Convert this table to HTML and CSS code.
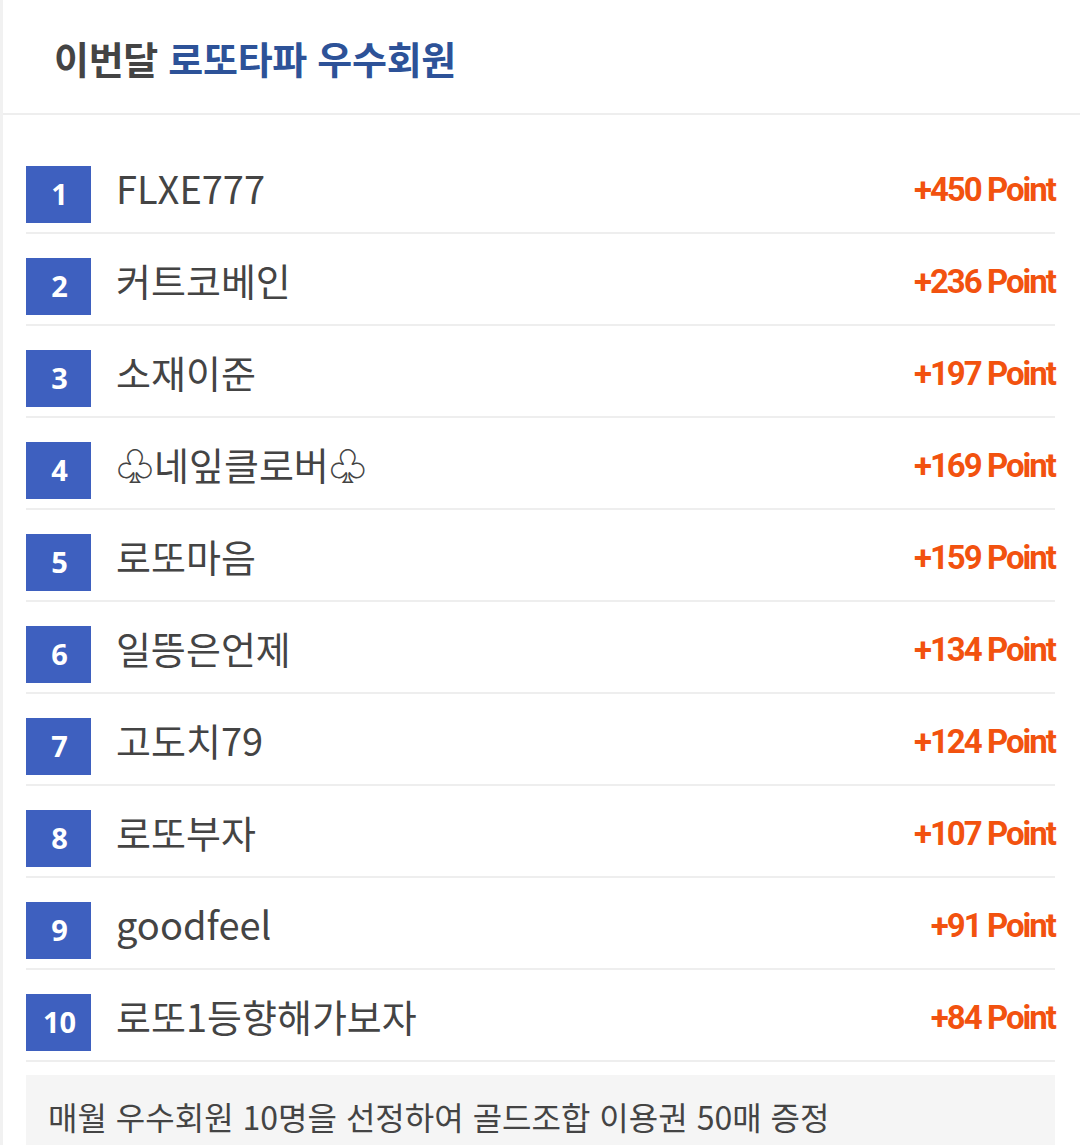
FILE: index.html
```html
<!DOCTYPE html>
<html lang="ko">
<head>
<meta charset="utf-8">
<link rel="stylesheet" href="styles.css">
</head>
<body>
<div class="panel">
  <div class="head">
    <h2 class="title">이번달 <span class="accent">로또타파 우수회원</span></h2>
  </div>
  <div class="body">
    <ul class="rank">
      <li class="row"><span class="badge">1</span><span class="name">FLXE777</span><span class="pt">+450 Point</span></li>
      <li class="row"><span class="badge">2</span><span class="name">커트코베인</span><span class="pt">+236 Point</span></li>
      <li class="row"><span class="badge">3</span><span class="name">소재이준</span><span class="pt">+197 Point</span></li>
      <li class="row"><span class="badge">4</span><span class="name">♧네잎클로버♧</span><span class="pt">+169 Point</span></li>
      <li class="row"><span class="badge">5</span><span class="name">로또마음</span><span class="pt">+159 Point</span></li>
      <li class="row"><span class="badge">6</span><span class="name">일뜽은언제</span><span class="pt">+134 Point</span></li>
      <li class="row"><span class="badge">7</span><span class="name">고도치79</span><span class="pt">+124 Point</span></li>
      <li class="row"><span class="badge">8</span><span class="name">로또부자</span><span class="pt">+107 Point</span></li>
      <li class="row"><span class="badge">9</span><span class="name">goodfeel</span><span class="pt">+91 Point</span></li>
      <li class="row"><span class="badge">10</span><span class="name">로또1등향해가보자</span><span class="pt">+84 Point</span></li>
    </ul>
    <div class="notice">매월 우수회원 10명을 선정하여 골드조합 이용권 50매 증정</div>
  </div>
</div>
</body>
</html>
```

FILE: styles.css
```css
* { box-sizing: border-box; }
html, body { margin: 0; padding: 0; background: #fff; }
body {
  font-family: "Noto Sans CJK KR", "Noto Sans", sans-serif;
  color: #444;
}
.panel {
  width: 1080px;
  min-height: 1145px;
  background: #fff;
  border-left: 3px solid #f1f1f1;
}
.head {
  height: 115px;
  border-bottom: 2px solid #eeeeee;
  padding-left: 51px;
  display: flex;
  align-items: center;
}
.title {
  margin: 0;
  font-size: 38px;
  font-weight: 700;
  color: #444;
  letter-spacing: -0.3px;
  line-height: 1;
  position: relative;
  top: 1px;
}
.accent { color: #2d5298; }
.body {
  padding: 27px 25px 0 23px;
}
.rank {
  list-style: none;
  margin: 0;
  padding: 0;
}
.row {
  display: flex;
  align-items: center;
  padding: 24px 0 9px;
  border-bottom: 2px solid #eeeeee;
}
.badge {
  width: 65px;
  height: 57px;
  flex: none;
  background: #3e60bf;
  color: #fff;
  font-family: "Noto Sans", sans-serif;
  font-weight: 700;
  font-size: 29px;
  display: flex;
  align-items: center;
  justify-content: center;
  padding-left: 2px;
  padding-bottom: 3px;
}
.name {
  flex: 1;
  margin-left: 25px;
  font-size: 38px;
  color: #444;
  line-height: 1;
  position: relative;
  top: -7px;
}
.pt {
  font-family: Roboto, sans-serif;
  font-weight: 700;
  font-size: 33px;
  letter-spacing: -2px;
  color: #f2520f;
  position: relative;
  top: -5px;
}
.notice {
  margin-top: 13px;
  background: #f5f5f5;
  padding: 22px 22px 20px;
  font-size: 32px;
  color: #444;
  line-height: 1.2;
}
```
